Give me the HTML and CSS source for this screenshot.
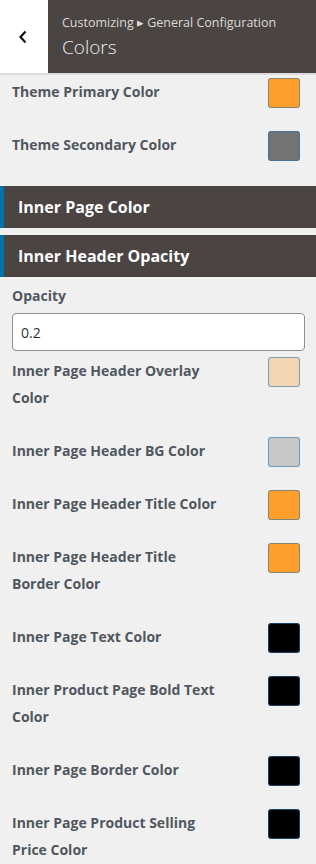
FILE: index.html
```html
<!DOCTYPE html>
<html lang="en">
<head>
    <meta charset="UTF-8">
    <meta name="viewport" content="width=device-width, initial-scale=1.0">
    <title>Colors - Customizing</title>
    <link rel="stylesheet" href="styles.css">
</head>
<body>
    <div class="customize-header">
        <button class="back-button" aria-label="Back">
            <svg width="10" height="14" viewBox="0 0 10 14">
                <polyline points="7.5,1.5 2.5,7 7.5,12.5" fill="none" stroke="#111" stroke-width="2.2"/>
            </svg>
        </button>
        <div class="header-title">
            <span class="breadcrumb">Customizing ▸ General Configuration</span>
            <h2 class="panel-name">Colors</h2>
        </div>
    </div>

    <div class="controls">
        <div class="color-row first">
            <span class="control-label">Theme Primary Color</span>
            <span class="swatch" style="background:#fe9f2b"></span>
        </div>
        <div class="color-row">
            <span class="control-label">Theme Secondary Color</span>
            <span class="swatch" style="background:#747373"></span>
        </div>

        <h3 class="section-heading">Inner Page Color</h3>
        <h3 class="section-heading">Inner Header Opacity</h3>

        <div class="text-control">
            <label for="opacity" class="control-label">Opacity</label>
            <input type="text" id="opacity" value="0.2">
        </div>

        <div class="color-row">
            <span class="control-label">Inner Page Header Overlay<br>Color</span>
            <span class="swatch" style="background:#f2d6b3"></span>
        </div>
        <div class="color-row">
            <span class="control-label">Inner Page Header BG Color</span>
            <span class="swatch" style="background:#c8c8c8"></span>
        </div>
        <div class="color-row">
            <span class="control-label">Inner Page Header Title Color</span>
            <span class="swatch" style="background:#fe9f2b"></span>
        </div>
        <div class="color-row">
            <span class="control-label">Inner Page Header Title<br>Border Color</span>
            <span class="swatch" style="background:#fe9f2b"></span>
        </div>
        <div class="color-row">
            <span class="control-label">Inner Page Text Color</span>
            <span class="swatch" style="background:#000"></span>
        </div>
        <div class="color-row">
            <span class="control-label">Inner Product Page Bold Text<br>Color</span>
            <span class="swatch" style="background:#000"></span>
        </div>
        <div class="color-row">
            <span class="control-label">Inner Page Border Color</span>
            <span class="swatch" style="background:#000"></span>
        </div>
        <div class="color-row">
            <span class="control-label">Inner Page Product Selling<br>Price Color</span>
            <span class="swatch" style="background:#000"></span>
        </div>
    </div>
</body>
</html>
```

FILE: styles.css
```css
* {
    margin: 0;
    padding: 0;
    box-sizing: border-box;
}

body {
    font-family: 'Open Sans', 'Noto Sans', sans-serif;
    background: #f0f0f1;
    color: #50575e;
    width: 316px;
    overflow: hidden;
}

.customize-header {
    display: flex;
    height: 75px;
    border-bottom: 2px solid #dcdcde;
}

.back-button {
    width: 48px;
    background: #fff;
    border: none;
    display: flex;
    align-items: center;
    justify-content: center;
    padding-right: 3px;
}

.header-title {
    flex: 1;
    background: #4a4543;
    padding: 14px 0 0 14px;
    color: #e6e4e2;
}

.breadcrumb {
    display: block;
    font-size: 12.5px;
    line-height: 18px;
    color: #dcd9d6;
}

.panel-name {
    font-size: 19px;
    font-weight: 300;
    line-height: 30px;
    color: #eeeceb;
}

.controls {
    padding-top: 3px;
}

.color-row {
    display: flex;
    justify-content: space-between;
    align-items: flex-start;
    padding: 0 16px 26px 12px;
}

.control-label {
    display: block;
    font-size: 14px;
    font-weight: 700;
    line-height: 27px;
    color: #50575e;
}

.swatch {
    width: 32px;
    height: 30px;
    margin-bottom: -3px;
    border: 1px solid rgba(34, 113, 177, 0.55);
    border-radius: 3px;
}

.section-heading {
    background: #4a4543;
    border-left: 4px solid #0073aa;
    color: #fff;
    font-size: 16px;
    font-weight: 700;
    height: 42px;
    line-height: 42px;
    padding-left: 14px;
    margin: 2px 0 7px;
}

.section-heading + .section-heading {
    margin: 0 0 6px;
}

.text-control {
    padding: 0 11px 6px 12px;
}

.text-control .control-label {
    line-height: 26px;
    margin-bottom: 4px;
}

.text-control input {
    width: 100%;
    height: 38px;
    border: 1px solid #8c8f94;
    border-radius: 4px;
    background: #fff;
    font-family: inherit;
    font-size: 14px;
    color: #2c3338;
    padding: 0 8px;
}
```
